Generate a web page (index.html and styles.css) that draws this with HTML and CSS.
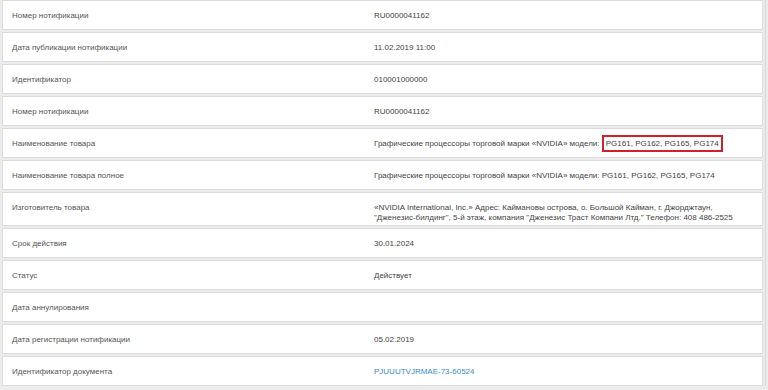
FILE: index.html
```html
<!DOCTYPE html>
<html lang="ru">
<head>
<meta charset="utf-8">
<title>Нотификация</title>
<link rel="stylesheet" href="styles.css">
</head>
<body>
<div class="list">
  <div class="row"><div class="label">Номер нотификации</div><div class="value">RU0000041162</div></div>
  <div class="row"><div class="label">Дата публикации нотификации</div><div class="value">11.02.2019 11:00</div></div>
  <div class="row"><div class="label">Идентификатор</div><div class="value">010001000000</div></div>
  <div class="row"><div class="label">Номер нотификации</div><div class="value">RU0000041162</div></div>
  <div class="row"><div class="label">Наименование товара</div><div class="value">Графические процессоры торговой марки «NVIDIA» модели: <span class="mark">PG161, PG162, PG165, PG174</span></div></div>
  <div class="row"><div class="label">Наименование товара полное</div><div class="value">Графические процессоры торговой марки «NVIDIA» модели: PG161, PG162, PG165, PG174</div></div>
  <div class="row"><div class="label">Изготовитель товара</div><div class="value">«NVIDIA International, Inc.» Адрес: Каймановы острова, о. Большой Кайман, г. Джорджтаун, "Дженезис-билдинг", 5-й этаж, компания "Дженезис Траст Компани Лтд." Телефон: 408 486-2525</div></div>
  <div class="row"><div class="label">Срок действия</div><div class="value">30.01.2024</div></div>
  <div class="row"><div class="label">Статус</div><div class="value">Действует</div></div>
  <div class="row"><div class="label">Дата аннулирования</div><div class="value"></div></div>
  <div class="row"><div class="label">Дата регистрации нотификации</div><div class="value">05.02.2019</div></div>
  <div class="row"><div class="label">Идентификатор документа</div><div class="value"><a class="link" href="#">PJUUUTVJRMAE-73-60524</a></div></div>
</div>
</body>
</html>
```

FILE: styles.css
```css
html, body {
  margin: 0;
  padding: 0;
  background: #ececec;
}
body {
  font-family: "Liberation Sans", Arial, sans-serif;
  font-size: 8px;
  color: #4a4a4a;
}
.list {
  display: flex;
  flex-direction: column;
  gap: 2px;
  padding: 0 2px;
  border-right: 1px solid #d6d6d6;
  margin-right: 2px;
}
.row {
  display: grid;
  grid-template-columns: 362px 1fr;
  box-sizing: border-box;
  min-height: 30px;
  padding: 10px 10px 2px 9px;
  line-height: 10px;
  background: #fff;
  border: 1px solid #dcdcdc;
}
.label {
  color: #555;
}
.value {
  color: #444;
}
.mark {
  border: 2px solid #d0202e;
  padding: 2px 2px;
}
.link {
  color: #3b8bc6;
  text-decoration: none;
}
```
